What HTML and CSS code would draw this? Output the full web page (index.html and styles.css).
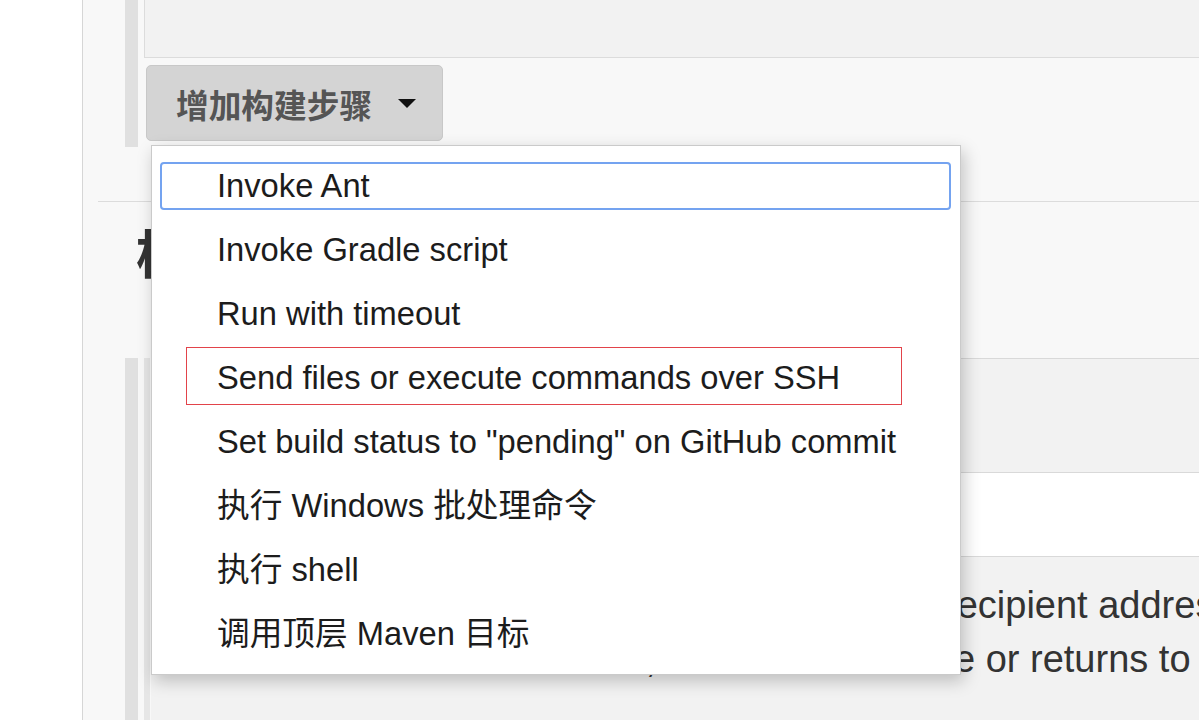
FILE: index.html
```html
<!DOCTYPE html>
<html lang="zh-CN">
<head>
<meta charset="utf-8">
<title>增加构建步骤</title>
<link rel="stylesheet" href="styles.css">
</head>
<body>
<div class="page">
  <div class="gutter"></div>
  <main class="main">
    <section class="step-block">
      <div class="bar"></div>
      <div class="step-content">
        <div class="prev-box"></div>
        <div class="add-wrap">
          <button class="add-btn" type="button">增加构建步骤<span class="caret"></span></button>
          <ul class="menu">
            <li class="menu-item"><a class="menu-link focused" href="#">Invoke Ant</a></li>
            <li class="menu-item"><a class="menu-link" href="#">Invoke Gradle script</a></li>
            <li class="menu-item"><a class="menu-link" href="#">Run with timeout</a></li>
            <li class="menu-item marked"><a class="menu-link" href="#">Send files or execute commands over SSH</a></li>
            <li class="menu-item"><a class="menu-link" href="#">Set build status to "pending" on GitHub commit</a></li>
            <li class="menu-item"><a class="menu-link" href="#">执行 Windows 批处理命令</a></li>
            <li class="menu-item"><a class="menu-link" href="#">执行 shell</a></li>
            <li class="menu-item"><a class="menu-link" href="#">调用顶层 Maven 目标</a></li>
          </ul>
        </div>
      </div>
    </section>
    <hr class="sep">
    <h2 class="section-title">构建后操作</h2>
    <section class="post-block">
      <div class="bar"></div>
      <div class="bar thin"></div>
      <div class="post-content">
        <div class="row head"></div>
        <div class="row input"></div>
        <div class="row help">
          <div class="help-line">Whitespace-separated list of recipient addresses. May reference build parameters.</div>
          <div class="help-line l2">fails, becomes unstable or returns to stable.</div>
        </div>
      </div>
    </section>
  </main>
</div>
</body>
</html>
```
FILE: styles.css
```css
html, body {
  margin: 0;
  height: 100%;
  overflow: hidden;
}

body {
  font-family: "Liberation Sans", Arial, "Noto Sans CJK SC", sans-serif;
  background: #fff;
  color: #222;
}

.page {
  display: flex;
  height: 720px;
}

.gutter {
  width: 82px;
  flex: none;
  background: #fff;
}

.main {
  flex: 1;
  min-width: 0;
  border-left: 1px solid #d6d6d6;
  background: #f8f8f8;
  display: flex;
  flex-direction: column;
}

/* ---------- build step block ---------- */
.step-block {
  display: flex;
  padding-left: 42px;
}

.bar {
  width: 13px;
  flex: none;
  background: #e0e0e0;
}

.bar.thin {
  width: 6px;
  margin-left: 6px;
  background: #e6e6e6;
}

.step-content {
  flex: 1;
  margin-left: 6px;
  padding-bottom: 6px;
}

.prev-box {
  height: 57px;
  border-left: 1px solid #dcdcdc;
  border-bottom: 1px solid #dcdcdc;
  background: #f2f2f2;
}

.add-wrap {
  position: relative;
  display: inline-block;
  margin: 7px 0 0 2px;
}

.add-btn {
  display: flex;
  align-items: center;
  height: 76px;
  padding: 0 26px 0 29px;
  border: 1px solid #c8c8c8;
  border-radius: 5px;
  background: #d4d4d4;
  color: #555;
  font-family: "Noto Sans CJK SC", "Liberation Sans", sans-serif;
  font-weight: bold;
  font-size: 32.7px;
  cursor: pointer;
}

.caret {
  width: 0;
  height: 0;
  margin-left: 26px;
  border-left: 9px solid transparent;
  border-right: 9px solid transparent;
  border-top: 9px solid #111;
}

/* ---------- dropdown menu ---------- */
.menu {
  position: absolute;
  left: 5px;
  top: 80px;
  z-index: 10;
  width: 810px;
  box-sizing: border-box;
  margin: 0;
  padding: 8px 0;
  list-style: none;
  background: #fff;
  border: 1px solid #cacaca;
  box-shadow: 3px 6px 16px rgba(0, 0, 0, 0.22);
}

.menu-item {
  position: relative;
  height: 64px;
  box-sizing: border-box;
  padding: 8px 9px 8px 8px;
}

.menu-link {
  display: block;
  height: 48px;
  box-sizing: border-box;
  padding-left: 55px;
  border: 2px solid transparent;
  border-radius: 4px;
  line-height: 44px;
  font-size: 32.7px;
  color: #1c1c1c;
  text-decoration: none;
  white-space: nowrap;
}

.menu-link.focused {
  border-color: #74a3f0;
}

.menu-item.marked::after {
  content: "";
  position: absolute;
  left: 34px;
  top: 1px;
  width: 716px;
  height: 58px;
  box-sizing: border-box;
  border: 1.5px solid #e2434a;
  pointer-events: none;
}

/* ---------- separator & heading ---------- */
.sep {
  height: 0;
  margin: 54px 0 0 15px;
  border: 0;
  border-top: 1px solid #dcdcdc;
}

.section-title {
  margin: 24px 0 80px 53px;
  font-family: "Noto Sans CJK SC", sans-serif;
  font-size: 52px;
  line-height: 52px;
  font-weight: bold;
  color: #333;
}

/* ---------- post-build block ---------- */
.post-block {
  flex: 1;
  display: flex;
  padding-left: 42px;
}

.post-content {
  flex: 1;
  min-width: 0;
  margin-left: 1px;
  display: flex;
  flex-direction: column;
}

.row {
  border-top: 1px solid #d9d9d9;
}

.row.head {
  height: 113px;
  background: #f2f2f2;
}

.row.input {
  height: 83px;
  background: #fff;
}

.row.help {
  flex: 1;
  padding: 21px 0 0 303px;
  background: #f2f2f2;
  font-size: 38px;
  line-height: 54px;
  color: #333;
}

.help-line {
  white-space: nowrap;
}

.help-line.l2 {
  padding-left: 124px;
}
```
